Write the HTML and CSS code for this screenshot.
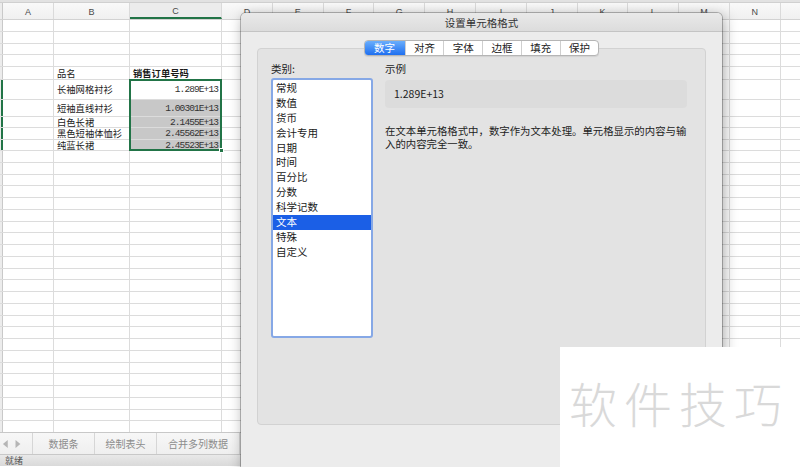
FILE: index.html
```html
<!DOCTYPE html>
<html lang="zh-CN">
<head>
<meta charset="utf-8">
<title>设置单元格格式</title>
<link rel="stylesheet" href="styles.css">
</head>
<body>
<div class="sheet">
  <div class="topstrip"></div>
  <div class="colhdr">
    <i class="rh"></i><b>A</b><b>B</b><b class="cur">C</b><b>D</b><b>E</b><b>F</b><b>G</b><b>H</b><b>I</b><b>J</b><b>K</b><b>L</b><b>M</b><b>N</b><b></b>
  </div>
  <div class="rows">
    <div class="row r12"><i class="rh"></i><i class="c"></i><i class="c"></i><i class="c"></i></div>
    <div class="row r12"><i class="rh"></i><i class="c"></i><i class="c"></i><i class="c"></i></div>
    <div class="row r11"><i class="rh"></i><i class="c"></i><i class="c"></i><i class="c"></i></div>
    <div class="row r12"><i class="rh"></i><i class="c"></i><i class="c"></i><i class="c"></i></div>
    <div class="row r13"><i class="rh"></i><i class="c"></i><i class="c">品名</i><i class="c bold">销售订单号码</i></div>
    <div class="row r20"><i class="rh sel"></i><i class="c"></i><i class="c">长袖网格衬衫</i><i class="c num">1.289E+13</i></div>
    <div class="row r17"><i class="rh sel"></i><i class="c"></i><i class="c">短袖直线衬衫</i><i class="c num gray">1.00301E+13</i></div>
    <div class="row r11"><i class="rh sel"></i><i class="c"></i><i class="c">白色长裙</i><i class="c num gray">2.1455E+13</i></div>
    <div class="row r12"><i class="rh sel"></i><i class="c"></i><i class="c">黑色短袖体恤衫</i><i class="c num gray">2.45562E+13</i></div>
    <div class="row r11"><i class="rh sel"></i><i class="c"></i><i class="c">纯蓝长裙</i><i class="c num gray">2.45523E+13</i></div>
    <div class="row"><i class="rh"></i><i class="c"></i><i class="c"></i><i class="c"></i></div>
    <div class="row"><i class="rh"></i><i class="c"></i><i class="c"></i><i class="c"></i></div>
    <div class="row"><i class="rh"></i><i class="c"></i><i class="c"></i><i class="c"></i></div>
    <div class="row"><i class="rh"></i><i class="c"></i><i class="c"></i><i class="c"></i></div>
    <div class="row"><i class="rh"></i><i class="c"></i><i class="c"></i><i class="c"></i></div>
    <div class="row"><i class="rh"></i><i class="c"></i><i class="c"></i><i class="c"></i></div>
    <div class="row"><i class="rh"></i><i class="c"></i><i class="c"></i><i class="c"></i></div>
    <div class="row"><i class="rh"></i><i class="c"></i><i class="c"></i><i class="c"></i></div>
    <div class="row"><i class="rh"></i><i class="c"></i><i class="c"></i><i class="c"></i></div>
    <div class="row"><i class="rh"></i><i class="c"></i><i class="c"></i><i class="c"></i></div>
    <div class="row"><i class="rh"></i><i class="c"></i><i class="c"></i><i class="c"></i></div>
    <div class="row"><i class="rh"></i><i class="c"></i><i class="c"></i><i class="c"></i></div>
    <div class="row"><i class="rh"></i><i class="c"></i><i class="c"></i><i class="c"></i></div>
    <div class="row"><i class="rh"></i><i class="c"></i><i class="c"></i><i class="c"></i></div>
    <div class="row"><i class="rh"></i><i class="c"></i><i class="c"></i><i class="c"></i></div>
    <div class="row"><i class="rh"></i><i class="c"></i><i class="c"></i><i class="c"></i></div>
    <div class="row"><i class="rh"></i><i class="c"></i><i class="c"></i><i class="c"></i></div>
    <div class="row"><i class="rh"></i><i class="c"></i><i class="c"></i><i class="c"></i></div>
    <div class="row"><i class="rh"></i><i class="c"></i><i class="c"></i><i class="c"></i></div>
    <div class="row"><i class="rh"></i><i class="c"></i><i class="c"></i><i class="c"></i></div>
    <div class="row"><i class="rh"></i><i class="c"></i><i class="c"></i><i class="c"></i></div>
    <div class="row"><i class="rh"></i><i class="c"></i><i class="c"></i><i class="c"></i></div>
    <div class="row"><i class="rh"></i><i class="c"></i><i class="c"></i><i class="c"></i></div>
    <div class="row"><i class="rh"></i><i class="c"></i><i class="c"></i><i class="c"></i></div>
    <div class="selection"><span class="handle"></span></div>
  </div>
  <div class="tabbar">
    <div class="arrows">
      <svg width="33" height="22" viewBox="0 0 33 22"><polygon points="8,7 3,11 8,15" fill="#b5b5b5"/><polygon points="16,7 21,11 16,15" fill="#b5b5b5"/></svg>
    </div>
    <div class="stab w62">数据条</div>
    <div class="stab w62">绘制表头</div>
    <div class="stab w83">合并多列数据</div>
  </div>
  <div class="status">就绪</div>
</div>

<div class="dialog">
  <div class="titlebar">设置单元格格式</div>
  <div class="dbody">
    <div class="tabs">
      <span class="tab on">数字</span><span class="tab">对齐</span><span class="tab">字体</span><span class="tab">边框</span><span class="tab">填充</span><span class="tab">保护</span>
    </div>
    <div class="panel">
      <div class="leftcol">
        <div class="label">类别:</div>
        <ul class="list">
          <li>常规</li><li>数值</li><li>货币</li><li>会计专用</li><li>日期</li><li>时间</li><li>百分比</li><li>分数</li><li>科学记数</li><li class="on">文本</li><li>特殊</li><li>自定义</li>
        </ul>
      </div>
      <div class="rightcol">
        <div class="label">示例</div>
        <div class="sample">1.289E+13</div>
        <p class="desc"><span>在文本单元格格式中，数字作为文本处理。单元格显示的内容与输</span><span>入的内容完全一致。</span></p>
      </div>
    </div>
  </div>
</div>

<div class="watermark">软件技巧</div>
</body>
</html>
```

FILE: styles.css
```css
* { box-sizing: border-box; }
html, body { margin: 0; padding: 0; }
body {
  width: 800px;
  height: 467px;
  overflow: hidden;
  position: relative;
  background: #fff;
  font-family: "Noto Sans CJK SC", "Noto Sans", sans-serif;
  color: #222;
}

/* ---------- spreadsheet ---------- */
.sheet { width: 800px; height: 467px; display: flex; flex-direction: column; }
.topstrip { height: 3px; background: #e2e2e2; border-bottom: 1px solid #d0d0d0; }
.colhdr, .row {
  display: grid;
  grid-template-columns: 3px 51px 76px 92px repeat(12, 50.8px);
}
.colhdr {
  height: 17px;
  background: linear-gradient(#f9f9f9, #f0f0f0);
  border-bottom: 1px solid #d2d2d2;
}
.colhdr b {
  font: normal 9px "Liberation Sans", Arial, sans-serif;
  color: #4a4a4a;
  display: flex;
  align-items: center;
  justify-content: center;
  padding-top: 2px;
  border-right: 1px solid #dadada;
}
.colhdr b.cur { background: #ececec; border-bottom: 2px solid #227447; }
.rh { background: #ececec; border-right: 1px solid #c9c9c9; }
.rh.sel { border-right: 2px solid #227447; }

.rows {
  position: relative;
  height: 412px;
  overflow: hidden;
  background-image: repeating-linear-gradient(to right, transparent 0 49.8px, #dcdcdc 49.8px 50.8px);
  background-position: 222px 0;
  background-size: 578px 100%;
  background-repeat: no-repeat;
}
.row { height: 11.75px; border-bottom: 1px solid #dcdcdc; }
.row.r11 { height: 11px; }
.row.r12 { height: 12px; }
.row.r13 { height: 13px; }
.row.r17 { height: 17px; }
.row.r20 { height: 20px; }
.c {
  font-style: normal;
  font-size: 9.3px;
  line-height: 9px;
  color: #1a1a1a;
  display: flex;
  align-items: center;
  padding: 0 3px;
  white-space: nowrap;
  border-right: 1px solid #dcdcdc;
}
.c.bold { font-weight: 700; }
.c.num {
  justify-content: flex-end;
  font-family: "Liberation Mono", "DejaVu Sans Mono", monospace;
  font-size: 9.5px;
  letter-spacing: -0.9px;
  padding-right: 3px;
  color: #333;
}
.c.gray { background: #c8c8c8; }

.selection {
  position: absolute;
  left: 129px;
  top: 59px;
  width: 93px;
  height: 72px;
  border: 2px solid #227447;
}
.handle {
  position: absolute;
  right: -4px;
  bottom: -4px;
  width: 5px;
  height: 5px;
  background: #227447;
  border: 1px solid #fff;
}

.tabbar {
  height: 22px;
  display: flex;
  background: linear-gradient(#f7f7f7, #efefef);
  border-top: 1px solid #c8c8c8;
}
.arrows { width: 33px; border-right: 1px solid #d6d6d6; display: flex; }
.stab {
  font-size: 10px;
  color: #8c8c8c;
  display: flex;
  align-items: center;
  justify-content: center;
  border-right: 1px solid #d6d6d6;
}
.stab.w62 { width: 62px; }
.stab.w83 { width: 83px; }
.status {
  height: 12px;
  font-size: 9px;
  line-height: 12px;
  color: #555;
  padding-left: 5px;
  background: linear-gradient(#e9e9e9, #d9d9d9);
  border-top: 1px solid #c8c8c8;
}

/* ---------- dialog ---------- */
.dialog {
  position: absolute;
  left: 241px;
  top: 13px;
  width: 481px;
  height: 470px;
  background: #ececec;
  border-radius: 5px 5px 0 0;
  box-shadow: 0 0 0 1px rgba(0,0,0,0.25), 2px 3px 14px rgba(0,0,0,0.35);
  display: flex;
  flex-direction: column;
}
.titlebar {
  height: 19px;
  border-radius: 5px 5px 0 0;
  background: linear-gradient(#e9e9e9, #dcdcdc);
  border-bottom: 1px solid #c4c4c4;
  text-align: center;
  font-size: 10.5px;
  line-height: 19px;
  color: #333;
}
.dbody { padding: 8px 16px 0; display: flex; flex-direction: column; }
.tabs {
  align-self: center;
  display: flex;
  height: 16px;
  margin-bottom: -8px;
  position: relative;
  z-index: 1;
  background: #fff;
  border: 1px solid #b5b5b5;
  border-radius: 4px;
  box-shadow: 0 1px 1px rgba(0,0,0,0.08);
}
.tab {
  width: 38.8px;
  font-size: 10.5px;
  line-height: 14px;
  text-align: center;
  color: #222;
  border-left: 1px solid #cfcfcf;
}
.tab:first-child { border-left: 0; }
.tab.on {
  width: 40px;
  color: #fff;
  background: linear-gradient(#6aaefc, #1f6ff0);
  border-radius: 3px 0 0 3px;
}
.panel {
  height: 377px;
  background: #e3e3e3;
  border: 1px solid #d2d2d2;
  border-radius: 4px;
  padding: 13px 0 0 13px;
  display: flex;
  gap: 12px;
}
.label { font-size: 10.5px; line-height: 14px; color: #222; }
.leftcol { width: 102px; display: flex; flex-direction: column; gap: 2px; }
.list {
  margin: 0;
  padding: 1px 0;
  list-style: none;
  height: 260px;
  background: #fff;
  border: 2px solid #86a8e6;
  border-radius: 3px;
}
.list li {
  font-size: 10.5px;
  line-height: 14.9px;
  height: 14.9px;
  padding-left: 3px;
  color: #1a1a1a;
}
.list li.on { background: #1b5fe6; color: #fff; }
.rightcol { width: 302px; display: flex; flex-direction: column; }
.sample {
  margin-top: 4px;
  height: 28px;
  background: #dcdcdc;
  border-radius: 4px;
  padding-left: 9px;
  font-size: 10.5px;
  line-height: 28px;
  color: #222;
}
.desc {
  margin: 17px 0 0;
  font-size: 10.4px;
  line-height: 11px;
  color: #222;
  white-space: nowrap;
  display: flex;
  flex-direction: column;
  gap: 2px;
}

/* ---------- watermark ---------- */
.watermark {
  position: absolute;
  left: 560px;
  top: 347px;
  width: 240px;
  height: 120px;
  background: #fff;
  padding: 31px 0 0 9px;
  font-size: 48px;
  line-height: 48px;
  font-weight: 300;
  letter-spacing: 7px;
  color: #d9d9d9;
  white-space: nowrap;
}
```
